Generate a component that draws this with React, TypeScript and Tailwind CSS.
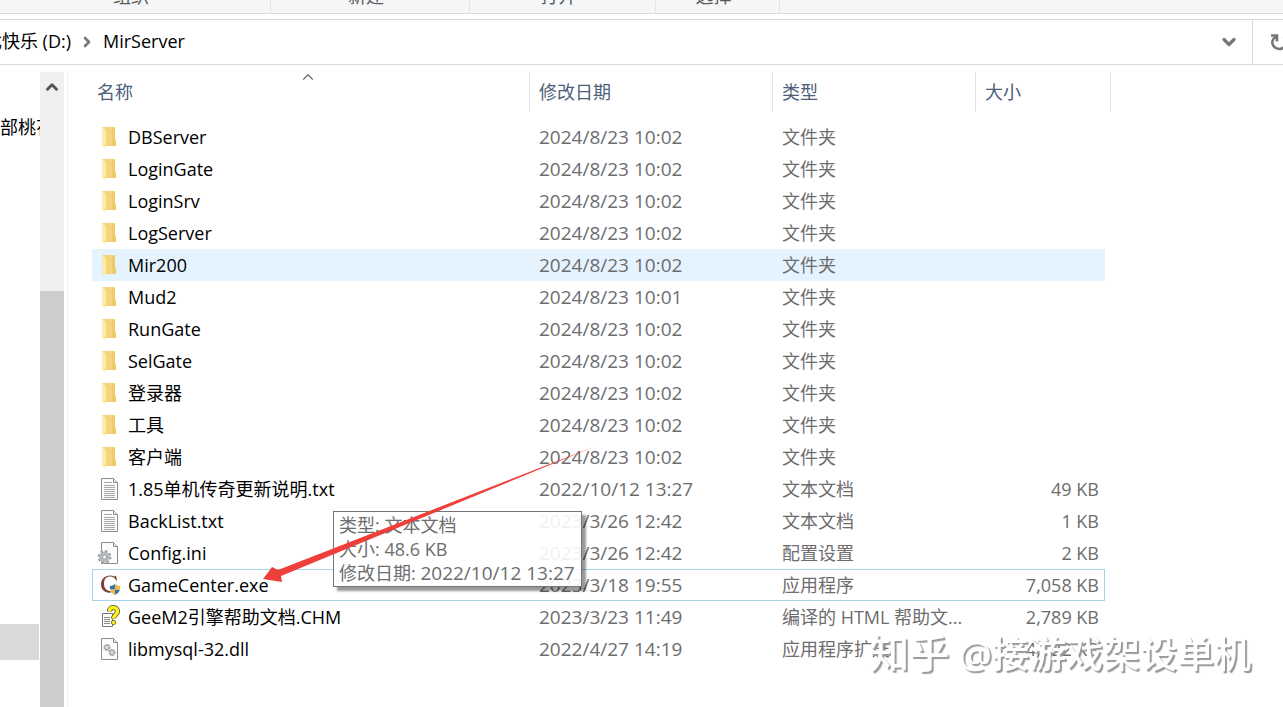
import { ChevronDown, ChevronRight, ChevronUp } from "lucide-react";

type FileKind = "folder" | "text" | "config" | "app" | "help" | "library";

interface FileEntry {
  name: string;
  modified: string;
  type: string;
  size?: string;
  kind: FileKind;
}

const folder = (name: string, modified = "2024/8/23 10:02"): FileEntry => ({
  name,
  modified,
  type: "文件夹",
  kind: "folder",
});

const entries: FileEntry[] = [
  folder("DBServer"),
  folder("LoginGate"),
  folder("LoginSrv"),
  folder("LogServer"),
  folder("Mir200"),
  folder("Mud2", "2024/8/23 10:01"),
  folder("RunGate"),
  folder("SelGate"),
  folder("登录器"),
  folder("工具"),
  folder("客户端"),
  { name: "1.85单机传奇更新说明.txt", modified: "2022/10/12 13:27", type: "文本文档", size: "49 KB", kind: "text" },
  { name: "BackList.txt", modified: "2023/3/26 12:42", type: "文本文档", size: "1 KB", kind: "text" },
  { name: "Config.ini", modified: "2023/3/26 12:42", type: "配置设置", size: "2 KB", kind: "config" },
  { name: "GameCenter.exe", modified: "2023/3/18 19:55", type: "应用程序", size: "7,058 KB", kind: "app" },
  { name: "GeeM2引擎帮助文档.CHM", modified: "2023/3/23 11:49", type: "编译的 HTML 帮助文...", size: "2,789 KB", kind: "help" },
  { name: "libmysql-32.dll", modified: "2022/4/27 14:19", type: "应用程序扩展", size: "4,122 KB", kind: "library" },
];

const HOVERED = "Mir200";
const FOCUSED = "GameCenter.exe";

function Page({ lines = false }: { lines?: boolean }) {
  return (
    <>
      <path d="M4.5 1.5h12l4 4v17h-16z" fill="#fbfbfb" stroke="#8d8d8d" />
      <path d="M16.5 1.5v4h4" fill="#e6e6e6" stroke="#8d8d8d" />
      {lines && (
        <path d="M7 5.5h8M7 8.5h11M7 10.5h11M7 12.5h11M7 14.5h11M7 16.5h11M7 18.5h11M7 20.5h11" stroke="#a8a8a8" />
      )}
    </>
  );
}

function FileIcon({ kind }: { kind: FileKind }) {
  return (
    <svg viewBox="0 0 24 24" className="h-6 w-6 shrink-0" fill="none" aria-hidden="true">
      {kind === "folder" && (
        <>
          <path d="M5 2h13v12l1 1v6H7z" fill="#f3d57c" />
          <path d="M15 3h3v11l1 1v6h-4z" fill="#eccb68" />
          <path d="M5 2l4 2.500v14L7.500 23 5 20.500z" fill="#fce9ab" />
        </>
      )}
      {kind === "text" && <Page lines />}
      {kind === "config" && (
        <>
          <Page />
          <circle cx="7.500" cy="16" r="4" fill="#d8dde0" stroke="#b4bbc0" strokeWidth="3" />
          <circle cx="7.500" cy="16" r="6" stroke="#9aa2a7" strokeWidth="2" strokeDasharray="2.300 2.400" />
          <circle cx="7.500" cy="16" r="2" fill="#fff" stroke="#8f979c" />
        </>
      )}
      {kind === "app" && (
        <>
          <path
            d="M20 7.500l-1-5-1.500 1C12 1 4.500 3.500 4 11c-.2 6 4.500 9.500 10 8.500v-1.200C9.500 18 7 15.200 7 10.500 7 6 9.500 3.500 13 3.500c3 0 5 1.500 6 4z"
            fill="#7c4035"
          />
          <path d="M18 10c2 1.500 3.800 1.800 5.800 1.800 0 5-1.600 8.700-5.800 10.700-4.200-2-5.800-5.700-5.800-10.700 2 0 3.800-.3 5.800-1.800z" fill="#e9edf0" />
          <path d="M18 11v5.500h-4.800c-.2-1-.3-2-.3-3.500 2 0 3.600-.6 5.100-2zM18 16.500h4.900c-.7 2.300-2.100 4-4.900 5.200z" fill="#2f74b8" />
          <path d="M18 11c1.500 1.400 3 2 5.100 2 0 1.500 0 2.500-.2 3.500H18zM18 16.500v5.200c-2.800-1.200-4.200-2.900-4.800-5.200z" fill="#f4bd33" />
        </>
      )}
      {kind === "help" && (
        <>
          <path d="M5.500 8.500h10v13h-10z" fill="#fff" stroke="#777" />
          <path d="M7 12.500h6M7 14.500h6M7 16.500h6M7 18.500h6" stroke="#888" />
          <path d="M12.500 6.500c0-3 2-4 4-4s4 1.500 4 4c0 3-4 3.500-4 7" stroke="#4f4f1c" strokeWidth="5" />
          <path d="M12.500 6.500c0-3 2-4 4-4s4 1.500 4 4c0 3-4 3.500-4 7" stroke="#fbf320" strokeWidth="3.400" />
          <circle cx="16.500" cy="17.500" r="2.200" fill="#fbf320" stroke="#4f4f1c" strokeWidth=".8" />
        </>
      )}
      {kind === "library" && (
        <>
          <Page />
          <circle cx="10" cy="10.500" r="2.500" fill="#ddd" stroke="#999" strokeWidth="2" strokeDasharray="1.500 .6" />
          <circle cx="15" cy="15.500" r="2.500" fill="#ddd" stroke="#999" strokeWidth="2" strokeDasharray="1.500 .6" />
        </>
      )}
    </svg>
  );
}

function Ribbon() {
  const group = "border-r border-[#e2e3e4] pr-2 pb-2";
  return (
    <header className="flex h-3.5 shrink-0 items-end overflow-hidden border-b border-[#d9dadb] bg-[#f5f6f7] text-center leading-[18px] text-[#5a5a5a]">
      <div className={`w-[271px] ${group}`}>组织</div>
      <div className={`w-[199px] ${group}`}>新建</div>
      <div className={`w-[186px] ${group}`}>打开</div>
      <div className={`w-[124px] ${group}`}>选择</div>
    </header>
  );
}

function AddressBar() {
  return (
    <nav className="mt-[5px] flex h-[46px] shrink-0 items-center overflow-hidden border-y border-[#d9d9d9]">
      <div className="flex w-[71px] shrink-0 justify-end overflow-hidden pb-0.5 whitespace-nowrap">
        <a href="#drive">尤快乐 (D:)</a>
      </div>
      <ChevronRight className="mx-2 h-4 w-4 text-[#777]" strokeWidth={4} />
      <a href="#mirserver" className="pb-0.5">MirServer</a>
      <button aria-label="历史记录" className="mr-[13px] ml-auto text-[#777]">
        <ChevronDown className="h-5 w-5" strokeWidth={4} />
      </button>
      <button aria-label="刷新" className="-mr-2 h-full shrink-0 border-l border-[#d9d9d9] pl-4 text-[#777]">
        <svg viewBox="0 0 22 22" className="h-[22px] w-[22px]" fill="none" stroke="currentColor" aria-hidden="true">
          <path d="M2 4.500h6v6M7 5.500C3 8 2.500 12 4.500 15s7 4 10 1.500 3.500-8 0-11" strokeWidth="2.600" />
        </svg>
      </button>
    </nav>
  );
}

function NavPane() {
  return (
    <aside className="flex shrink-0">
      <div className="flex w-10 flex-col justify-between overflow-hidden pt-[46px] pb-[47px] whitespace-nowrap">
        <span className="leading-[18px]">部桃花</span>
        <div className="mr-px h-9 bg-[#d9d9d9]" />
      </div>
      <div className="flex w-6 flex-col bg-[#f0f0f0]">
        <button aria-label="向上滚动" className="flex h-[219px] items-start justify-center pt-1.5 text-[#555]">
          <ChevronUp className="h-[18px] w-[18px]" strokeWidth={4} />
        </button>
        <div className="flex-1 bg-[#cdcdcd]" />
      </div>
      <div className="w-1 border-r border-[#f2f2f2]" />
    </aside>
  );
}

function FileRow({ entry }: { entry: FileEntry }) {
  const focused = entry.name === FOCUSED;
  const cell = focused ? "border-y border-[#a5d3e8]" : "";
  const meta = `${cell} truncate pl-[9px] text-[#6d6d6d]`;
  return (
    <tr className={entry.name === HOVERED ? "h-8 bg-[#e5f3ff]" : "h-8"}>
      <td className={`${cell} ${focused ? "border-l pl-1" : "pl-[5px]"}`}>
        <div className="flex items-center gap-[7px]">
          <FileIcon kind={entry.kind} />
          <span>{entry.name}</span>
        </div>
      </td>
      <td className={`${meta} text-[19px]`}>{entry.modified}</td>
      <td className={meta}>{entry.type}</td>
      <td className={`${meta} ${focused ? "border-r pr-[5px]" : "pr-1.5"} text-right`}>{entry.size}</td>
    </tr>
  );
}

function FileTable() {
  const head = "border-r border-[#e2e2e2] pl-[9px] text-left font-normal";
  return (
    <table className="w-[1019px] table-fixed border-separate border-spacing-0 leading-6">
      <colgroup>
        <col className="w-[438px]" />
        <col className="w-[243px]" />
        <col className="w-[203px]" />
        <col className="w-[129px]" />
        <col className="w-1.5" />
      </colgroup>
      <thead>
        <tr className="h-10 text-[#4c607a]">
          <th className="relative border-r border-[#e2e2e2] pl-[5px] text-left font-normal">
            名称
            <ChevronUp className="absolute -top-1 left-[207px] h-[18px] w-[18px] text-[#666]" strokeWidth={1.5} />
          </th>
          <th className={head}>修改日期</th>
          <th className={head}>类型</th>
          <th className={head} colSpan={2}>大小</th>
        </tr>
      </thead>
      <tbody>
        <tr className="h-[9px]" aria-hidden="true" />
        {entries.map((entry) => (
          <FileRow key={entry.name} entry={entry} />
        ))}
      </tbody>
    </table>
  );
}

export default function App() {
  return (
    <div className="flex h-screen flex-col overflow-hidden bg-white font-['Open_Sans','Noto_Sans_CJK_SC',sans-serif] text-[18px] leading-6 text-black">
      <Ribbon />
      <AddressBar />
      <div className="flex min-h-0 flex-1 pt-[7px]">
        <NavPane />
        <main className="relative min-w-0 flex-1 pl-6">
          <FileTable />

          {/* Hover details for the selected text file */}
          <div
            role="tooltip"
            className="absolute top-[439px] left-[265px] border border-[#767676] bg-white/90 py-px pr-1.5 pl-[5px] whitespace-nowrap text-[#6d6d6d] shadow-[4px_4px_2px_rgba(0,0,0,0.4)]"
          >
            <p>类型: 文本文档</p>
            <p>大小: 48.6 KB</p>
            <p>
              修改日期: <span className="text-[19px]">2022/10/12 13:27</span>
            </p>
          </div>

          <svg
            viewBox="0 0 336 140"
            className="absolute top-[373px] left-[194px] h-[140px] w-[336px]"
            aria-hidden="true"
          >
            <path d="M334 1L16 125 10 122 1 134 20 137 19 131z" fill="#ee3f3a" />
          </svg>
        </main>
      </div>

      <div className="pointer-events-none fixed right-8 bottom-[26px] text-[37px] leading-[54px] font-medium whitespace-nowrap text-white [text-shadow:2px_2px_1px_#999]">
        <span className="text-[40px]">知乎</span> @接游戏架设单机
      </div>
    </div>
  );
}
